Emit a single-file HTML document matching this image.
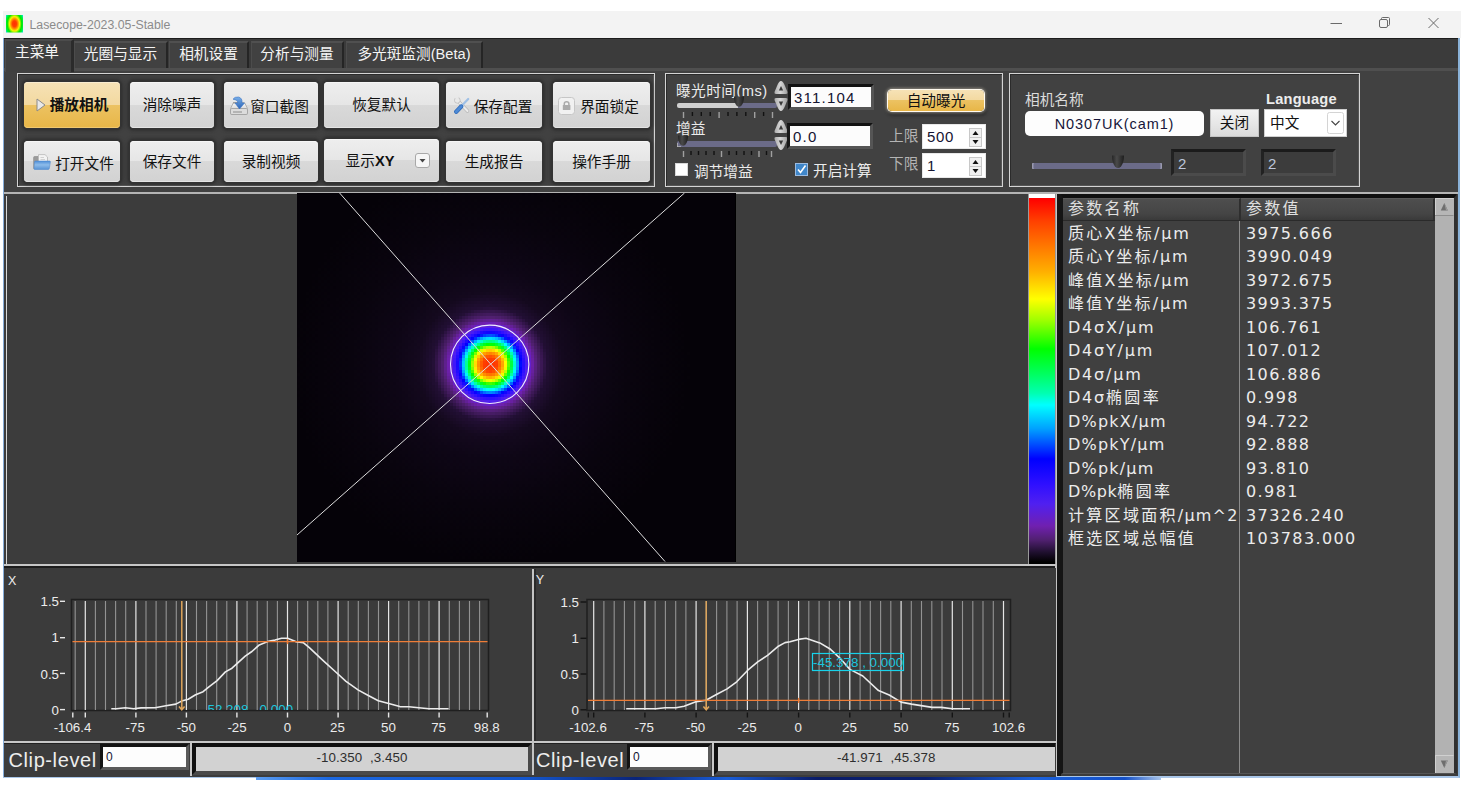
<!DOCTYPE html>
<html lang="zh">
<head>
<meta charset="utf-8">
<title>Lasecope-2023.05-Stable</title>
<style>
*{box-sizing:border-box;margin:0;padding:0}
html,body{width:1470px;height:786px;overflow:hidden;background:#fff}
body{position:relative;font-family:"Liberation Sans","Noto Sans CJK SC",sans-serif;font-size:14.67px;color:#f0f0f0}
.a{position:absolute}
.t{position:absolute;white-space:nowrap;line-height:1}
/* title bar */
#title{left:3px;top:11px;width:1458px;height:27px;background:#f3f3f3}
#title .t{left:26.500px;top:8px;font-size:12.300px;color:#8b8b8b}
/* window body */
#body{left:3px;top:38px;width:1457px;height:740px;background:#3c3c3c;border-left:1px solid #86acd8;border-right:2px solid #8ab2d8;border-bottom:2px solid #a9c6e8}
/* tabs */
#tabstrip{left:4px;top:38px;width:1454px;height:30px;background:#3b3b3b;border-top:1px solid #1c1c1c}
.tab{position:absolute;top:41px;height:27px;background:#414141;border-left:1px solid #4c4c4c;border-top:2px solid #505050;border-right:2px solid #252525;text-align:center;line-height:23px;color:#f4f4f4;white-space:nowrap}
.tab.sel{top:39px;height:33px;background:#404040;border-top:2px solid #4c4c4c;border-right:3px solid #2b2b2b;line-height:22px;padding-right:3px}
#pane{left:4px;top:68px;width:1454px;height:125.500px;background:#414141;border-top:3px solid #4f4f4f;border-bottom:2px solid #b4b4b4}
.grp{position:absolute;top:73px;height:114px;border:1px solid #d4d4d4;box-shadow:inset 1px 1px 0 #2b2b2b,inset -1px -1px 0 #555}
/* buttons */
.btn{position:absolute;border-radius:4px;background:linear-gradient(#eeeeee 0%,#e6e6e6 49%,#d9d9d9 50%,#d2d2d2 100%);box-shadow:0 0 0 2px #333,0 0 3px 3px rgba(40,40,40,.6),inset 0 1px 0 #f6f6f6,inset 0 -1px 0 #e4e4e4;color:#111;text-align:center;white-space:nowrap}
.btn.r1{top:82px;height:46px;line-height:46px}
.btn i{font-style:normal;position:relative;top:1.500px}
.btn.r2{top:141px;height:41px;line-height:43px}
.btn.or{background:linear-gradient(#f6e2b6 0%,#f3d9a0 49%,#ecc262 50%,#e8b647 100%);box-shadow:0 0 0 2px #333,0 0 3px 3px rgba(40,40,40,.6),inset 0 1px 0 #f9ecd0,inset 0 -1px 0 #f0c870;font-weight:bold}
.btn svg{vertical-align:middle;position:relative;top:-1px}

/* exposure group */
.lbl{position:absolute;white-space:nowrap;line-height:1;color:#ececec}
.trk{position:absolute;height:5px;border-radius:2px}
.inp{position:absolute;background:#fcfcfc;color:#141432;border:3px solid;border-color:#121212 #555 #555 #181818;white-space:nowrap;line-height:1;font-size:15px;letter-spacing:1.200px;padding:3px 0 0 3px;width:86px;height:26px}
.chk{position:absolute;width:13px;height:13px;background:#fff;border:1px solid #d8d8d8}
.spin{position:absolute;width:64px;height:25px;background:#fff;border:1px solid #e8e8e8;color:#141432}
.spin .t{left:4px;top:4px;font-size:15px;letter-spacing:.6px}
.spin .ud{position:absolute;right:3px;top:3px;width:13px;height:19px}
.dk{position:absolute;height:27px;width:75px;background:#3c3c3c;border:3px solid;border-color:#1b1b1b #4b4b4b #4b4b4b #222;color:#bcc6da;font-size:15px;line-height:1;padding:4px 0 0 4px}

/* main */
#imgpanel{left:4px;top:194px;width:1053px;height:371px;background:#3c3c3c}
#tbl{left:1061px;top:194px;width:396px;height:580px;background:#404040;border-left:2px solid #151515;border-top:4px solid #101010;border-right:3.500px solid #303030;border-bottom:1px solid #555}
.th{position:absolute;top:0;height:23px;background:linear-gradient(#4e4e4e,#454545 70%,#3a3a3a);border-bottom:1px solid #2a2a2a;border-right:2px solid #2e2e2e;border-top:1px solid #5a5a5a}
.td{position:absolute;white-space:nowrap;font-size:16px;letter-spacing:2.300px;line-height:1;color:#ececec}
.td .l{font-family:"DejaVu Sans",sans-serif;letter-spacing:1.800px}
.td.v .l{letter-spacing:1.400px}

/* charts */
#charts text{font-family:"Liberation Sans",sans-serif;font-size:13.300px;fill:#ececec}
.clip{position:absolute;white-space:nowrap;line-height:1;font-size:20px;color:#ededed;letter-spacing:.6px}
.cin{position:absolute;background:#fdfdfd;border:3px solid;border-color:#141414 #5a5a5a #5a5a5a #141414;color:#141432;font-size:12px;line-height:1;height:26px;padding:4px 0 0 3px}
.cbox{position:absolute;background:#d2d2d2;color:#2e2e2e;font-size:13.330px;letter-spacing:.1px;text-align:center;border:4px solid;border-color:#101010 #4a4a4a #4a4a4a #101010;height:32.500px;top:742.500px;line-height:21px}
</style>
</head>
<body>
<!-- title bar -->
<div id="title" class="a">
  <svg class="a" style="left:3px;top:4px" width="17" height="18" viewBox="0 0 17 18">
    <defs><radialGradient id="ig" gradientUnits="userSpaceOnUse" cx="8.500" cy="8.800" r="15" gradientTransform="translate(8.500 0) scale(0.7 1) translate(-8.500 0)">
      <stop offset="0" stop-color="#ff3000"/><stop offset=".2" stop-color="#ff4000"/><stop offset=".34" stop-color="#ff9000"/><stop offset=".48" stop-color="#f6f600"/><stop offset=".58" stop-color="#80f000"/><stop offset=".68" stop-color="#00e800"/><stop offset=".84" stop-color="#00f040"/><stop offset=".94" stop-color="#00e8c0"/><stop offset="1" stop-color="#00b0ff"/></radialGradient></defs>
    <rect width="17" height="17.500" fill="url(#ig)"/>
  </svg>
  <div class="t">Lasecope-2023.05-Stable</div>
  <svg class="a" style="left:1320px;top:0" width="138" height="27" viewBox="0 0 138 27" fill="none" stroke="#6a6a6a" stroke-width="1">
    <path d="M7.5 12.5H19"/>
    <rect x="56.500" y="8.500" width="8" height="8" rx="1.500"/><path d="M58.500 8.300V7.500Q58.500 6.500 59.500 6.500H65.500Q66.500 6.500 66.500 7.500V13.500Q66.500 14.500 65.500 14.500H64.700"/>
    <path d="M105.500 7L115.500 17M115.500 7L105.500 17"/>
  </svg>
</div>
<div id="body" class="a"></div>
<div id="tabstrip" class="a"></div>
<div id="pane" class="a"></div>
<div class="tab sel" style="left:5px;width:69px">主菜单</div>
<div class="tab" style="left:74px;width:94px">光圈与显示</div>
<div class="tab" style="left:169px;width:80px">相机设置</div>
<div class="tab" style="left:251px;width:93px">分析与测量</div>
<div class="tab" style="left:346px;width:137px">多光斑监测(Beta)</div>

<div class="grp" style="left:17px;width:638px"></div>
<div class="grp" style="left:665px;width:338px"></div>
<div class="grp" style="left:1009px;width:351px"></div>

<!-- buttons row 1 -->
<div class="btn r1 or" style="left:24px;width:96px"><svg width="10" height="14" viewBox="0 0 10 14" style="margin-right:4px"><path d="M1 1L9 7L1 13Z" fill="#e9e9e9" stroke="#8a8a8a" stroke-width="1"/></svg>播放相机</div>
<div class="btn r1" style="left:130px;width:84px">消除噪声</div>
<div class="btn r1" style="left:224px;width:94px;padding-right:2px"><svg width="18" height="19" viewBox="0 0 18 19" style="margin-right:2px;top:-1px;margin-left:-1px"><defs><linearGradient id="tg" x1="0" y1="0" x2="0" y2="1"><stop offset="0" stop-color="#fafafa"/><stop offset="1" stop-color="#bdbdbd"/></linearGradient><linearGradient id="ab" x1="0" y1="0" x2="0" y2="1"><stop offset="0" stop-color="#79b0ea"/><stop offset="1" stop-color="#2b63b4"/></linearGradient></defs><path d="M3.500 6.500H14.500L17.500 12.500V17Q17.500 18.500 16 18.500H2Q.5 18.500 .5 17V12.500Z" fill="url(#tg)" stroke="#b0b0b0"/><path d="M3 6.800H8" stroke="#9a9a9a" stroke-width="1.400"/><rect x=".5" y="12.500" width="17" height="6" rx="1.300" fill="#dcdcdc" stroke="#a6a6a6"/><path d="M3 16H12" stroke="#aaa" stroke-width="1.600"/><path d="M3 3.200Q4.500 .6 8.500 1Q12.500 2 12 7H14.500L9.500 13L5 7H7.800Q8 4 3 3.200Z" fill="url(#ab)" stroke="#3a74c4" stroke-width=".6"/></svg><i>窗口截图</i></div>
<div class="btn r1" style="left:324px;width:115px">恢复默认</div>
<div class="btn r1" style="left:446px;width:96px;padding-right:2px"><svg width="16" height="17" viewBox="0 0 16 17" style="margin-right:4px;top:-1px"><path d="M3.200 3.200L13.500 14" stroke="#b4b4b4" stroke-width="3.400" stroke-linecap="round"/><path d="M3.200 3.200L13.500 14" stroke="#ececec" stroke-width="2.200" stroke-linecap="round"/><circle cx="3.300" cy="3.300" r="2.900" fill="#e9e9e9" stroke="#bcbcbc" stroke-width=".8"/><path d="M0 0L3.600 3.400L4.800 0Z" fill="#e8e8e8"/><path d="M7.500 9L14.200 2" stroke="#9fc0e6" stroke-width="2.200" stroke-linecap="round"/><path d="M2.200 14.800L7.200 9.500" stroke="#2f6ab8" stroke-width="4.200" stroke-linecap="round"/><path d="M2.200 14.800L7.200 9.500" stroke="#4d8ad6" stroke-width="2.800" stroke-linecap="round"/></svg><i>保存配置</i></div>
<div class="btn r1" style="left:553px;width:97px;padding-right:6px"><svg width="17" height="18" viewBox="0 0 17 18" style="margin-right:5px;top:0"><rect x=".5" y=".5" width="16" height="17" rx="3" fill="#f1f1f1" stroke="#c6c6c6"/><rect x="4.800" y="8" width="7.600" height="5" rx=".6" fill="#ababab"/><path d="M6.300 8V6.800Q6.300 4.800 8.600 4.800Q10.900 4.800 10.900 6.800V8" fill="none" stroke="#ababab" stroke-width="1.500"/></svg><i>界面锁定</i></div>
<!-- buttons row 2 -->
<div class="btn r2" style="left:24px;width:96px;padding-left:3px"><svg width="18" height="16" viewBox="0 0 18 16" style="margin-right:4px;top:-1px"><defs><linearGradient id="fg" x1="0" y1="0" x2="0" y2="1"><stop offset="0" stop-color="#4f8fd8"/><stop offset=".45" stop-color="#8ebcea"/><stop offset="1" stop-color="#5792d4"/></linearGradient></defs><path d="M.6 3.500Q.6 2.500 1.600 2.500H5L6.500 4H14V14.500H.6Z" fill="#9b9b9b" stroke="#8a8a8a" stroke-width=".6"/><path d="M5.500 .6H12L14.500 3V10H5.500Z" fill="#f3f3f3" stroke="#b8b8b8" stroke-width=".8"/><path d="M7.500 3.500H11M7.500 5.500H12" stroke="#c8c8c8" stroke-width=".8"/><path d="M2.300 7H16.500Q17.600 7 17.400 8L16.300 14.600Q16.100 15.500 15 15.500H1.800Q.8 15.500 1 14.500L1.500 8Q1.600 7 2.300 7Z" fill="url(#fg)" stroke="#4a86cf" stroke-width=".5"/></svg><i>打开文件</i></div>
<div class="btn r2" style="left:130px;width:84px">保存文件</div>
<div class="btn r2" style="left:224px;width:94px">录制视频</div>
<div class="btn r2" style="left:324px;width:115px;top:139px;height:43px;padding-right:23px;line-height:44px">显示<b>XY</b><svg style="position:absolute;left:91px;top:14px" width="15" height="15" viewBox="0 0 15 15"><rect x=".5" y=".5" width="14" height="14" rx="2.500" fill="#f6f6f6" stroke="#a8a8a8"/><path d="M4.500 6L7.500 9.500L10.500 6Z" fill="#444"/></svg></div>
<div class="btn r2" style="left:446px;width:96px">生成报告</div>
<div class="btn r2" style="left:553px;width:97px">操作手册</div>

<svg width="0" height="0" style="position:absolute"><defs><linearGradient id="th" x1="0" y1="0" x2="1" y2="0"><stop offset="0" stop-color="#262626"/><stop offset=".4" stop-color="#4a4a4a"/><stop offset="1" stop-color="#1e1e1e"/></linearGradient></defs></svg>
<!-- exposure group -->
<div class="lbl" style="left:676px;top:83.500px;font-size:14.67px;letter-spacing:.45px">曝光时间(ms)</div>
<div class="trk" style="left:677px;top:103px;width:100px;background:linear-gradient(90deg,#cfcfcf 0,#cfcfcf 61px,#6b6b88 61px)"></div>
<svg class="a" style="left:733px;top:96px" width="12" height="12" viewBox="0 0 12 12"><path d="M1 .5H11Q11 6.500 8.500 9.500Q6 12 3.500 9.500Q1 6.500 1 .5Z" fill="url(#th)"/></svg>
<svg class="a" style="left:680px;top:112px" width="96" height="7" viewBox="0 0 96 7"><g stroke="#111" stroke-width="1.400"><path d="M12.400 0V4M21.300 0V4M30.200 0V4M48 0V4M56.900 0V4M65.800 0V4M83.600 0V4"/></g><g stroke="#a0a0a0" stroke-width="1.400"><path d="M3.500 0V6M39.100 0V6M74.700 0V6M92.500 0V6"/></g></svg>
<div class="lbl" style="left:676px;top:122px;font-size:14.67px">增益</div>
<div class="trk" style="left:677px;top:141px;width:100px;height:6px;background:#6b6b88"></div>
<svg class="a" style="left:677px;top:135px" width="12" height="12" viewBox="0 0 12 12"><path d="M1 .5H11Q11 6.500 8.500 9.500Q6 12 3.500 9.500Q1 6.500 1 .5Z" fill="url(#th)"/><path d="M0 8V12H4" fill="none" stroke="#bbb" stroke-width="1.500"/></svg>
<svg class="a" style="left:680px;top:151px" width="96" height="7" viewBox="0 0 96 7"><g stroke="#111" stroke-width="1.400"><path d="M11 0V4M18.500 0V4M26 0V4M34 0V4M49 0V4M56.500 0V4M64 0V4M71.500 0V4M86.500 0V4"/></g><g stroke="#a0a0a0" stroke-width="1.400"><path d="M3.500 0V6M41.500 0V6M79 0V6M91.500 0V6"/></g></svg>
<!-- spin arrows -->
<svg class="a" style="left:773px;top:80px" width="16" height="32" viewBox="0 0 16 32"><defs><linearGradient id="sg" x1="0" y1="0" x2="1" y2="0"><stop offset="0" stop-color="#adadad"/><stop offset=".45" stop-color="#d6d6d6"/><stop offset="1" stop-color="#9e9e9e"/></linearGradient></defs><path d="M8 1Q10 1 12 6L14.500 12Q15 14 13 14H3Q1 14 1.500 12L4 6Q6 1 8 1Z" fill="url(#sg)"/><path d="M8 31Q10 31 12 26L14.500 20Q15 18 13 18H3Q1 18 1.500 20L4 26Q6 31 8 31Z" fill="url(#sg)"/><path d="M5.800 10.500L8 6L10.200 10.500Z" fill="#3a3a3a"/><path d="M5.800 21.500L8 26L10.200 21.500Z" fill="#3a3a3a"/></svg>
<svg class="a" style="left:773px;top:119px" width="16" height="32" viewBox="0 0 16 32"><path d="M8 1Q10 1 12 6L14.500 12Q15 14 13 14H3Q1 14 1.500 12L4 6Q6 1 8 1Z" fill="url(#sg)"/><path d="M8 31Q10 31 12 26L14.500 20Q15 18 13 18H3Q1 18 1.500 20L4 26Q6 31 8 31Z" fill="url(#sg)"/><path d="M5.800 10.500L8 6L10.200 10.500Z" fill="#3a3a3a"/><path d="M5.800 21.500L8 26L10.200 21.500Z" fill="#3a3a3a"/></svg>
<div class="inp" style="left:788px;top:84px">311.104</div>
<div class="inp" style="left:787px;top:123px">0.0</div>
<div class="chk" style="left:675px;top:163px"></div>
<div class="lbl" style="left:694px;top:165px;font-size:14.67px">调节增益</div>
<div class="chk" style="left:795px;top:163px;background:#3f86c9;border-color:#9bbbe0"><svg width="11" height="11" viewBox="0 0 11 11" style="display:block"><path d="M2 5.500L4.500 8.500L9.500 1.500" fill="none" stroke="#fff" stroke-width="1.600"/></svg></div>
<div class="lbl" style="left:813px;top:164px;font-size:14.67px">开启计算</div>
<div class="btn or" style="left:888px;top:90px;width:96px;height:21px;line-height:22.500px;font-weight:normal;box-shadow:0 0 0 1px #fffaf0,0 0 3px 2px rgba(255,245,220,.4),1px 3px 3px 2px rgba(30,30,30,.55)">自动曝光</div>
<div class="lbl" style="left:889px;top:129px;font-size:14.67px;color:#b4b4b4">上限</div>
<div class="lbl" style="left:889px;top:157px;font-size:14.67px;color:#b4b4b4">下限</div>
<div class="spin" style="left:922px;top:124px"><div class="t">500</div><svg class="ud" viewBox="0 0 13 19"><rect x=".5" y=".5" width="12" height="18" fill="#f0f0f0" stroke="#c8c8c8"/><path d="M.5 9.500H12.500" stroke="#c8c8c8"/><path d="M3.500 7L6.500 3L9.500 7Z" fill="#111"/><path d="M3.500 12L6.500 16L9.500 12Z" fill="#111"/></svg></div>
<div class="spin" style="left:922px;top:153px"><div class="t">1</div><svg class="ud" viewBox="0 0 13 19"><rect x=".5" y=".5" width="12" height="18" fill="#f0f0f0" stroke="#c8c8c8"/><path d="M.5 9.500H12.500" stroke="#c8c8c8"/><path d="M3.500 7L6.500 3L9.500 7Z" fill="#111"/><path d="M3.500 12L6.500 16L9.500 12Z" fill="#111"/></svg></div>

<!-- camera group -->
<div class="lbl" style="left:1025px;top:92.500px;font-size:14.67px;color:#dcdcdc">相机名称</div>
<div class="a" style="left:1025px;top:111px;width:179px;height:25px;background:#fdfdfd;border-radius:5px;color:#16163a;text-align:center;line-height:27px;font-size:14.500px;letter-spacing:.9px">N0307UK(cam1)</div>
<div class="a" style="left:1210px;top:109px;width:49px;height:28px;background:linear-gradient(#f2f2f2,#e6e6e6 55%,#dadada);border:1px solid #c4c4c4;color:#111;text-align:center;line-height:27px;font-size:14.67px">关闭</div>
<div class="lbl" style="left:1266px;top:92px;font-size:14.67px;font-weight:bold;color:#ececec;letter-spacing:.2px">Language</div>
<div class="a" style="left:1264px;top:109px;width:83px;height:28px;background:#fff;border:1px solid #d0d0d0;color:#111;line-height:26px;padding-left:5px;font-size:14.67px">中文<svg class="a" style="right:2px;top:2px" width="17" height="22" viewBox="0 0 17 22"><rect x=".5" y=".5" width="16" height="21" rx="2" fill="#fff" stroke="#d4d4d4"/><path d="M4.500 9L8.500 13L12.500 9" fill="none" stroke="#444" stroke-width="1.100"/></svg></div>
<div class="trk" style="left:1032px;top:163px;width:130px;height:6px;background:#6b6b88;border-radius:1px;box-shadow:inset 1.500px 0 0 #9a9ab0,inset -1.500px 0 0 #9a9ab0"></div>
<svg class="a" style="left:1111px;top:155px" width="14" height="14" viewBox="0 0 14 14"><path d="M1 .5H13Q13 7.500 10 11.500Q7 14.500 4 11.500Q1 7.500 1 .5Z" fill="url(#th)"/></svg>
<div class="dk" style="left:1171px;top:149px">2</div>
<div class="dk" style="left:1261px;top:149px">2</div>

<!-- main image panel -->
<div id="imgpanel" class="a"></div>
<div class="a" style="left:6px;top:196px;width:1px;height:368px;background:#d8d8d8"></div>
<div class="a" style="left:4px;top:564px;width:1053px;height:2px;background:#c6c6c6"></div>
<div class="a" style="left:4px;top:566px;width:1053px;height:2.500px;background:#1c1c1c"></div>
<div class="a" style="left:1055px;top:194px;width:2.400px;height:582px;background:#c4c4c4"></div>
<div class="a" style="left:1057.400px;top:194px;width:4px;height:582px;background:#151515"></div>
<div id="beam" class="a" style="left:297px;top:193px;width:439px;height:369px;background:#000;overflow:hidden">
  <svg width="439" height="369" viewBox="0 0 439 369" style="display:block">
    <defs>
      <radialGradient id="bg" cx="193" cy="171.500" r="200" gradientUnits="userSpaceOnUse"><stop offset="0.0000" stop-color="#ff2c00"/><stop offset="0.0350" stop-color="#ff4000"/><stop offset="0.0540" stop-color="#ff8000"/><stop offset="0.0655" stop-color="#ffb000"/><stop offset="0.0785" stop-color="#ffff00"/><stop offset="0.0875" stop-color="#a0ff00"/><stop offset="0.1005" stop-color="#00ff00"/><stop offset="0.1115" stop-color="#00ff60"/><stop offset="0.1205" stop-color="#00ffb0"/><stop offset="0.1260" stop-color="#00ffff"/><stop offset="0.1375" stop-color="#00a0ff"/><stop offset="0.1540" stop-color="#0000ff"/><stop offset="0.1705" stop-color="#3010ff"/><stop offset="0.1855" stop-color="#5020f0"/><stop offset="0.2075" stop-color="#7020b0"/><stop offset="0.2350" stop-color="#502070"/><stop offset="0.2850" stop-color="#220f34"/><stop offset="0.3600" stop-color="#14091e"/><stop offset="0.4750" stop-color="#0e0616"/><stop offset="0.7000" stop-color="#09040e"/><stop offset="1.0000" stop-color="#050208"/></radialGradient>
      <filter id="px" x="0" y="0" width="100%" height="100%" color-interpolation-filters="sRGB"><feFlood x="1" y="1" width="1" height="1" flood-color="#000"/><feComposite width="3" height="3"/><feTile result="a"/><feComposite in="SourceGraphic" in2="a" operator="in"/><feMorphology operator="dilate" radius="1"/></filter>
    </defs>
    <rect width="439" height="369" fill="url(#bg)" filter="url(#px)"/>
    <g stroke="#dedede" stroke-width="1" fill="none">
      <path d="M42.600 0L368 368.500"/>
      <path d="M387.500 0L0 342"/>
    </g>
    <circle cx="192.700" cy="171.300" r="39.200" fill="none" stroke="#f0ecff" stroke-width="1.100"/>
  </svg>
</div>
<!-- colour bar -->
<div class="a" style="left:1028px;top:194px;width:28px;height:370px;border-left:1px solid #9a9a9a;border-right:1px solid #9a9a9a;background:linear-gradient(#fff 0,#fff 4px,#ff0000 4.500px,#ff4000 27px,#ff8000 56px,#ffb000 78px,#ffff00 105px,#a0ff00 126px,#00ff00 155px,#00ff60 180px,#00ffb0 199px,#00ffff 211px,#00a0ff 235px,#0000ff 265px,#3010ff 291px,#5020f0 310px,#7020b0 332px,#502070 346px,#201030 358px,#000 368px)"></div>
<!-- table -->
<div id="tbl" class="a">
  <div class="th" style="left:0;width:178px"></div>
  <div class="th" style="left:178px;width:194px"></div>
  <div class="a" style="left:176px;top:23px;width:1px;height:552px;background:#8c8c8c"></div>
  <div class="td" style="left:5px;top:3.0px;color:#e0e0e0">参数名称</div>
  <div class="td" style="left:183px;top:3.0px;color:#e0e0e0">参数值</div>
  <div class="td" style="left:5px;top:27.8px">质心<span class="l">X</span>坐标<span class="l">/μm</span></div><div class="td v" style="left:183px;top:27.8px"><span class="l">3975.666</span></div>
<div class="td" style="left:5px;top:51.3px">质心<span class="l">Y</span>坐标<span class="l">/μm</span></div><div class="td v" style="left:183px;top:51.3px"><span class="l">3990.049</span></div>
<div class="td" style="left:5px;top:74.8px">峰值<span class="l">X</span>坐标<span class="l">/μm</span></div><div class="td v" style="left:183px;top:74.8px"><span class="l">3972.675</span></div>
<div class="td" style="left:5px;top:98.3px">峰值<span class="l">Y</span>坐标<span class="l">/μm</span></div><div class="td v" style="left:183px;top:98.3px"><span class="l">3993.375</span></div>
<div class="td" style="left:5px;top:121.8px"><span class="l">D4σX/μm</span></div><div class="td v" style="left:183px;top:121.8px"><span class="l">106.761</span></div>
<div class="td" style="left:5px;top:145.3px"><span class="l">D4σY/μm</span></div><div class="td v" style="left:183px;top:145.3px"><span class="l">107.012</span></div>
<div class="td" style="left:5px;top:168.8px"><span class="l">D4σ/μm</span></div><div class="td v" style="left:183px;top:168.8px"><span class="l">106.886</span></div>
<div class="td" style="left:5px;top:192.3px"><span class="l">D4σ</span>椭圆率</div><div class="td v" style="left:183px;top:192.3px"><span class="l">0.998</span></div>
<div class="td" style="left:5px;top:215.8px"><span class="l" style="letter-spacing:1.200px">D%pkX/μm</span></div><div class="td v" style="left:183px;top:215.8px"><span class="l">94.722</span></div>
<div class="td" style="left:5px;top:239.3px"><span class="l" style="letter-spacing:1.200px">D%pkY/μm</span></div><div class="td v" style="left:183px;top:239.3px"><span class="l">92.888</span></div>
<div class="td" style="left:5px;top:262.8px"><span class="l" style="letter-spacing:1.200px">D%pk/μm</span></div><div class="td v" style="left:183px;top:262.8px"><span class="l">93.810</span></div>
<div class="td" style="left:5px;top:286.3px"><span class="l" style="letter-spacing:.6px">D%pk</span>椭圆率</div><div class="td v" style="left:183px;top:286.3px"><span class="l">0.981</span></div>
<div class="td" style="left:5px;top:309.8px">计算区域面积<span class="l" style="letter-spacing:1.200px">/μm^2</span></div><div class="td v" style="left:183px;top:309.8px"><span class="l">37326.240</span></div>
<div class="td" style="left:5px;top:333.3px">框选区域总幅值</div><div class="td v" style="left:183px;top:333.3px"><span class="l">103783.000</span></div>

  <div class="a" style="left:372px;top:0;width:18.500px;height:575px;background:#b2b2b2"></div>
  <svg class="a" style="left:372px;top:0" width="19" height="18" viewBox="0 0 19 18"><rect x="0" y="0" width="18.500" height="17.500" fill="#b6b6b6"/><path d="M0 17.500H18.500" stroke="#8e8e8e"/><path d="M.5 0V17M0 .5H18.500" stroke="#d0d0d0"/><path d="M5.800 12.500L9.300 5L12.800 12.500Z" fill="#6e6e6e"/><path d="M9.300 5L11 12.500H12.800Z" fill="#9a9a9a"/></svg>
  <svg class="a" style="left:372px;top:557px" width="19" height="18" viewBox="0 0 19 18"><rect x="0" y="0" width="18.500" height="18" fill="#b6b6b6"/><path d="M.5 0V18M0 .5H18.500" stroke="#d0d0d0"/><path d="M5.800 5.500L9.300 13L12.800 5.500Z" fill="#6e6e6e"/><path d="M9.300 13L11 5.500H12.800Z" fill="#9a9a9a"/></svg>
</div>

<!-- charts -->
<div class="a" style="left:4px;top:568px;width:1052px;height:173px;background:#3b3b3b"></div>
<div class="a" style="left:534.400px;top:569px;width:1.600px;height:172px;background:#2a2a2a"></div>
<svg id="charts" class="a" style="left:4px;top:569px" width="1052" height="172" viewBox="4 569 1052 172">
<text x="8" y="585" style="font-size:12.500px">X</text>
<text x="535.800" y="584.300" style="font-size:12.500px">Y</text>
<rect x="71.5" y="599.500" width="417" height="111" fill="#3b3b3b" stroke="#1f1f1f" stroke-width="1.500"/>
<path d="M75.2 601V710M95.4 601V710M105.5 601V710M115.6 601V710M125.7 601V710M146 601V710M156.1 601V710M166.2 601V710M176.3 601V710M196.5 601V710M206.6 601V710M216.7 601V710M226.8 601V710M247.1 601V710M257.2 601V710M267.3 601V710M277.4 601V710M297.6 601V710M307.7 601V710M317.8 601V710M327.9 601V710M348.2 601V710M358.3 601V710M368.4 601V710M378.5 601V710M398.7 601V710M408.8 601V710M418.9 601V710M429 601V710M449.3 601V710M459.4 601V710M469.5 601V710M479.6 601V710" stroke="#939393" stroke-width="1.100"/>
<path d="M85.3 601V710M135.9 601V710M186.4 601V710M236.9 601V710M287.5 601V710M338.1 601V710M388.6 601V710M439.1 601V710" stroke="#e6e6e6" stroke-width="1.200"/>
<path d="M85.3 712.500V717.500M135.9 712.500V717.500M186.4 712.500V717.500M236.9 712.500V717.500M287.5 712.500V717.500M338.1 712.500V717.500M388.6 712.500V717.500M439.1 712.500V717.500M72.8 712.500V717.500M487.2 712.500V717.500" stroke="#e6e6e6" stroke-width="1.400"/>
<path d="M60 601.3H65" stroke="#e6e6e6" stroke-width="1.400"/>
<path d="M60 637.7H65" stroke="#e6e6e6" stroke-width="1.400"/>
<path d="M60 673.4H65" stroke="#e6e6e6" stroke-width="1.400"/>
<path d="M60 709.6H65" stroke="#e6e6e6" stroke-width="1.400"/>
<polyline fill="none" stroke="#ececec" stroke-width="1.600" stroke-linejoin="round" points="111.3,708.8 116.2,708.8 125.3,707.8 133.6,708.8 141,707.9 155.1,707.8 165.9,705.8 175.8,704.1 181.6,701.1 188.2,699.2 195.6,694.7 203.1,691.7 208.9,686.8 217.1,680.6 225.4,671.9 232,668.2 237.8,662.8 245.2,656.2 251.9,651.5 259.3,644.9 268.4,641.3 275,640.1 281.6,638.3 287.6,638.3 295.6,641.6 303.3,642.6 309.6,647.9 322.9,660.3 337.4,673.5 346,681.3 358.4,690.1 368.3,695.5 378.3,700.8 388.7,703.6 399.8,706.6 408.9,706.8 418.8,707.8 429,708.8 448.6,708.8"/>
<path d="M72.5 641.6H487.5" stroke="#ee7d37" stroke-width="1.300"/>
<path d="M287.5 639.1V644.1" stroke="#ee7d37" stroke-width="1.300"/>
<path d="M181.8 601V709.500M179.0 706.500L181.8 709.800L184.60000000000002 706.500" stroke="#dfa65c" stroke-width="1.500" fill="none"/>
<g text-anchor="end"><text x="59" y="606">1.5</text><text x="59" y="642.400">1</text><text x="59" y="678.500">0.5</text><text x="59" y="714.500">0</text></g>
<text x="72.5" y="732" text-anchor="middle">-106.4</text><text x="135.2" y="732" text-anchor="middle">-75</text><text x="186.3" y="732" text-anchor="middle">-50</text><text x="237" y="732" text-anchor="middle">-25</text><text x="287.4" y="732" text-anchor="middle">0</text><text x="337.4" y="732" text-anchor="middle">25</text><text x="388.4" y="732" text-anchor="middle">50</text><text x="438.6" y="732" text-anchor="middle">75</text><text x="486.8" y="732" text-anchor="middle">98.8</text>
<svg x="72" y="600" width="416" height="110" viewBox="72 600 416 110"><text x="203" y="714" style="fill:#1cc6de;font-size:13.400px">-52.208 , 0.000</text></svg>
<rect x="587.0" y="599.500" width="423.5" height="111" fill="#3b3b3b" stroke="#1f1f1f" stroke-width="1.500"/>
<path d="M603.9 601V710M614.2 601V710M624.4 601V710M634.7 601V710M655.2 601V710M665.4 601V710M675.7 601V710M685.9 601V710M706.4 601V710M716.6 601V710M726.9 601V710M737.1 601V710M757.6 601V710M767.9 601V710M778.1 601V710M788.4 601V710M808.8 601V710M819.1 601V710M829.3 601V710M839.6 601V710M860.1 601V710M870.3 601V710M880.6 601V710M890.8 601V710M911.3 601V710M921.5 601V710M931.8 601V710M942 601V710M962.5 601V710M972.8 601V710M983 601V710M993.3 601V710" stroke="#939393" stroke-width="1.100"/>
<path d="M593.7 601V710M644.9 601V710M696.1 601V710M747.4 601V710M798.6 601V710M849.8 601V710M901.1 601V710M952.3 601V710M1003.5 601V710" stroke="#e6e6e6" stroke-width="1.200"/>
<path d="M593.7 712.500V717.500M644.9 712.500V717.500M696.1 712.500V717.500M747.4 712.500V717.500M798.6 712.500V717.500M849.8 712.500V717.500M901.1 712.500V717.500M952.3 712.500V717.500M1003.5 712.500V717.500M588.3 712.500V717.500M1009.2 712.500V717.500" stroke="#141414" stroke-width="1.400"/>
<path d="M580.500 602H586.500" stroke="#141414" stroke-width="1.400"/>
<path d="M580.500 638.3H586.500" stroke="#141414" stroke-width="1.400"/>
<path d="M580.500 674H586.500" stroke="#141414" stroke-width="1.400"/>
<path d="M580.500 709.8H586.500" stroke="#141414" stroke-width="1.400"/>
<polyline fill="none" stroke="#ececec" stroke-width="1.600" stroke-linejoin="round" points="626.2,708.8 656,708.8 665.1,707.8 675.9,707.8 684.1,706.3 696.5,701.6 706,700.3 716.4,694.5 727.1,688.9 736.7,681.8 747.8,670.2 757.7,661.9 767.6,655.3 778.4,646.2 785,642.6 790,641.8 798.4,639.4 806,638.3 819.8,642.9 829.7,648.7 839.6,657.8 849.9,669.4 862.8,676 878.5,690.6 889.2,695 901.1,702.1 911.6,704.1 932.2,707.4 941.3,707.4 952.4,708.8 970,708.8"/>
<path d="M588.0 700.4H1009.5" stroke="#ee7d37" stroke-width="1.300"/>
<path d="M798.6 697.9V702.9" stroke="#ee7d37" stroke-width="1.300"/>
<path d="M706.2 601V709.500M703.4000000000001 706.500L706.2 709.800L709.0 706.500" stroke="#dfa65c" stroke-width="1.500" fill="none"/>
<g text-anchor="end"><text x="579" y="606.500">1.5</text><text x="579" y="643">1</text><text x="579" y="678.500">0.5</text><text x="579" y="714.500">0</text></g>
<text x="588" y="732" text-anchor="middle">-102.6</text><text x="644.2" y="732" text-anchor="middle">-75</text><text x="695.6" y="732" text-anchor="middle">-50</text><text x="747" y="732" text-anchor="middle">-25</text><text x="798.3" y="732" text-anchor="middle">0</text><text x="849.5" y="732" text-anchor="middle">25</text><text x="901" y="732" text-anchor="middle">50</text><text x="951.9" y="732" text-anchor="middle">75</text><text x="1008.6" y="732" text-anchor="middle">102.6</text>
<rect x="812.500" y="653.500" width="91" height="17" fill="none" stroke="#18d2ea" stroke-width="1.200"/>
<text x="813" y="667" style="fill:#1cc6de;font-size:13.400px">-45.378 , 0.000</text>
</svg>
<!-- clip-level rows -->
<div class="a" style="left:4px;top:741px;width:1052px;height:1.500px;background:#c8c8c8"></div>
<div class="a" style="left:4px;top:742.500px;width:1052px;height:34px;background:#3c3c3c;border-top:1.500px solid #222"></div>
<div class="a" style="left:532px;top:569px;width:2.400px;height:206px;background:#c4c4c4"></div>
<div class="clip" style="left:8.500px;top:749.500px">Clip-level</div>
<div class="cin" style="left:100px;top:744px;width:89px">0</div>
<div class="a" style="left:190px;top:743px;width:1.500px;height:33px;background:#c8c8c8"></div>
<div class="cbox" style="left:192px;width:340px">-10.350&nbsp; ,3.450</div>
<div class="clip" style="left:536px;top:749.500px">Clip-level</div>
<div class="cin" style="left:627px;top:744px;width:84px">0</div>
<div class="a" style="left:712px;top:743px;width:1.500px;height:33px;background:#c8c8c8"></div>
<div class="cbox" style="left:714px;width:340.500px;border-right-width:0">-41.971&nbsp; ,45.378</div>

<div class="a" style="left:256px;top:777px;width:905px;height:3px;background:linear-gradient(90deg,#5a9cf0 0,#1c68e0 8%,#1456cc 30%,#0a2478 42%,#1a5ed8 52%,#0a1c68 62%,#0a2070 74%,#1c62dc 86%,#1450c8 96%,#a8c4ea 100%)"></div>
</body>
</html>
